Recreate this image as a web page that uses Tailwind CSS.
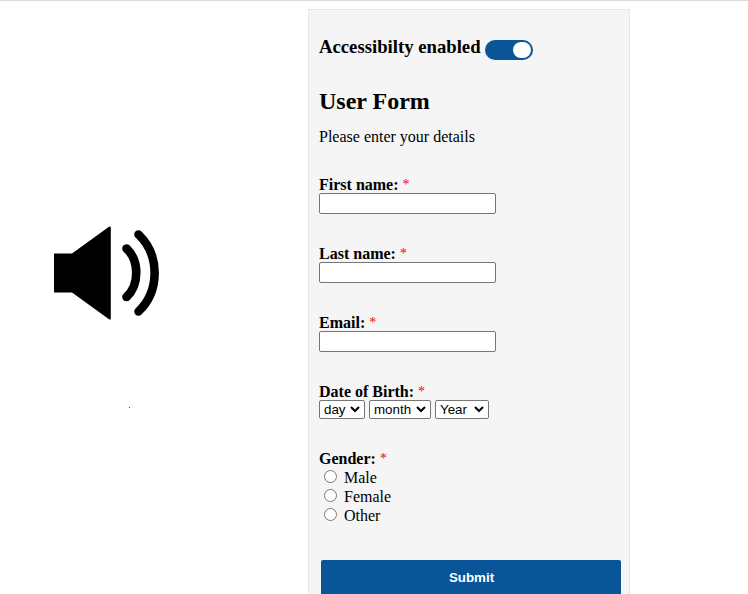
<!DOCTYPE html>
<html lang="en">
<head>
<meta charset="utf-8">
<title>User Form</title>
<script src="https://cdn.jsdelivr.net/npm/@tailwindcss/browser@4"></script>
</head>
<body class="h-[594px] w-[748px] overflow-hidden border-t border-[#dadadf] bg-white font-['Liberation_Serif',serif] text-[16px] leading-[18px] text-black">
<main class="flex h-[593px]">
  <section class="w-[308px] shrink-0 pt-[225px]">
    <svg class="ml-[52px] block" width="108" height="95" viewBox="0 0 108 95" role="img" aria-label="Speaker">
      <path d="M2 27.5H20L57 .8Q58.8 0 58.8 2V92Q58.8 94.5 57 93.2L20 66.500H2Z" fill="#000"/>
      <path d="M74.500 22.500C87.500 34.500 87.500 59 74.500 71" fill="none" stroke="#000" stroke-width="8.600" stroke-linecap="round"/>
      <path d="M86.500 8.500C108 29 108 65 86.500 85.500" fill="none" stroke="#000" stroke-width="8.600" stroke-linecap="round"/>
    </svg>
    <div class="mt-[86px] ml-[129px] size-px bg-[#444]"></div>
  </section>
  <form class="mt-2 h-[585px] w-[322px] shrink-0 border border-b-0 border-[#e6e6e6] bg-[#f5f5f5] px-[10px] pt-[27px]">
    <div class="flex h-[24px]">
      <h3 class="w-[166px] whitespace-nowrap text-[18.72px] leading-[20px] font-bold">Accessibilty enabled</h3>
      <span class="mt-[3px] flex h-5 w-12 items-center justify-end rounded-full bg-[#095597] pr-[2px]"><span class="h-4 w-[18px] rounded-full bg-white"></span></span>
    </div>
    <h2 class="mt-[26px] h-[28px] text-[24px] leading-[28px] font-bold">User Form</h2>
    <p class="mt-[13px] h-[18px]">Please enter your details</p>
    <div class="mt-[30px] h-[69px]">
      <label for="first" class="block h-[17px] font-bold">First name: <span class="align-[1px] text-[14px] leading-none font-normal text-[#f00]">*</span></label>
      <input id="first" class="block h-[21px] w-[177px] rounded-[2px] border border-[#767676] bg-white">
    </div>
    <div class="h-[69px]">
      <label for="last" class="block h-[17px] font-bold">Last name: <span class="align-[1px] text-[14px] leading-none font-normal text-[#f00]">*</span></label>
      <input id="last" class="block h-[21px] w-[177px] rounded-[2px] border border-[#767676] bg-white">
    </div>
    <div class="h-[69px]">
      <label for="email" class="block h-[17px] font-bold">Email: <span class="align-[1px] text-[14px] leading-none font-normal text-[#f00]">*</span></label>
      <input id="email" class="block h-[21px] w-[177px] rounded-[2px] border border-[#767676] bg-white">
    </div>
    <div class="h-[67px]">
      <div class="h-[17px] font-bold">Date of Birth: <span class="align-[1px] text-[14px] leading-none font-normal text-[#f00]">*</span></div>
      <div class="flex gap-1 font-['Liberation_Sans',sans-serif] text-[13.333px] leading-[17px]">
        <div class="flex h-[19px] w-[46px] justify-between rounded-[2px] border border-[#767676] bg-white pr-1 pl-1">day<svg class="mt-[5px]" width="10" height="7" viewBox="0 0 10 7"><path d="M1 1L5 5L9 1" fill="none" stroke="#000" stroke-width="2"/></svg></div>
        <div class="flex h-[19px] w-[62px] justify-between rounded-[2px] border border-[#767676] bg-white pr-1 pl-1">month<svg class="mt-[5px]" width="10" height="7" viewBox="0 0 10 7"><path d="M1 1L5 5L9 1" fill="none" stroke="#000" stroke-width="2"/></svg></div>
        <div class="flex h-[19px] w-[54px] justify-between rounded-[2px] border border-[#767676] bg-white pr-1 pl-1">Year<svg class="mt-[5px]" width="10" height="7" viewBox="0 0 10 7"><path d="M1 1L5 5L9 1" fill="none" stroke="#000" stroke-width="2"/></svg></div>
      </div>
    </div>
    <div class="h-[17px] font-bold">Gender: <span class="align-[1px] text-[14px] leading-none font-normal text-[#f00]">*</span></div>
    <div class="mt-[2px]">
      <label class="flex h-[19px]"><input type="radio" name="gender" class="mt-px mr-[7px] ml-[5px] size-[13px]">Male</label>
      <label class="flex h-[19px]"><input type="radio" name="gender" class="mt-px mr-[7px] ml-[5px] size-[13px]">Female</label>
      <label class="flex h-[19px]"><input type="radio" name="gender" class="mt-px mr-[7px] ml-[5px] size-[13px]">Other</label>
    </div>
    <button type="button" class="mt-[34px] ml-[2px] block h-[34px] w-[300px] rounded-t-[2px] bg-[#095597] pl-px font-['Liberation_Sans',sans-serif] text-[13.333px] leading-[17px] font-bold text-white">Submit</button>
  </form>
</main>
</body>
</html>
